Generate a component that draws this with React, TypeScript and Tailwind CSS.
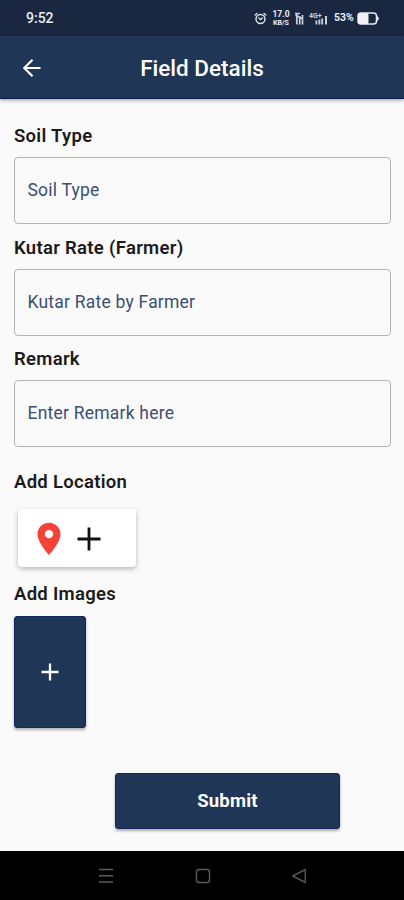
import React from 'react';

function AlarmIcon() {
  return (
    <svg width="13" height="13" viewBox="0 0 13 13" fill="none" stroke="#dfe4ec" strokeWidth="1.4" strokeLinecap="round">
      <circle cx="6.5" cy="7" r="4.5" />
      <path d="M1.200 3 3 1.400M11.800 3 10 1.400M4.800 6l1.800 1.500L8.400 6" />
    </svg>
  );
}

function VolteIcon() {
  return (
    <svg width="9" height="13" viewBox="0 0 9 13" fill="none" stroke="#c9d0dc" strokeWidth="1.7">
      <path d="M0 1.500h5M1.800 1v11.500M4.700 4v8.500M7.500 3v9.500M.5 3l7 4" />
    </svg>
  );
}

function SignalIcon() {
  return (
    <svg width="19" height="13" viewBox="0 0 19 13" fill="#c9d0dc">
      <path d="M6.500 8.500h1.800v4H6.500zM9.500 7.500h1.800v5H9.500zM12.300 6.500h1.800v6h-1.800zM16 4h2v8.500h-2z" />
      <text x="0" y="6" fontSize="7" fontWeight="700" fontFamily="Roboto">4G+</text>
    </svg>
  );
}

function BatteryIcon() {
  return (
    <svg width="23" height="13" viewBox="0 0 23 13">
      <rect x="1" y="1" width="18.5" height="11" rx="3" fill="none" stroke="#e6eaf0" strokeWidth="1.5" />
      <rect x="1" y="1" width="10.500" height="11" rx="2" fill="#f1f3f6" />
      <path d="M20 3.500 22.200 6.500 20 9.500z" fill="#e6eaf0" />
    </svg>
  );
}

function StatusBar() {
  return (
    <div className="flex h-9 items-center bg-[#1a2740] pl-[26px] pr-6 text-[#e8ecf2]">
      <span className="text-[14px] font-medium leading-[18px]">9:52</span>
      <div className="ml-auto flex items-center">
        <AlarmIcon />
        <div className="ml-[5px] flex w-[18px] flex-col items-center font-bold">
          <span className="text-[8.5px] leading-[10px]">17.0</span>
          <span className="text-[7px] leading-[8px]">KB/S</span>
        </div>
        <div className="ml-[5px]"><VolteIcon /></div>
        <div className="ml-[5px]"><SignalIcon /></div>
        <span className="ml-[6px] w-[21px] text-[10.5px] font-bold leading-3">53%</span>
        <div className="ml-[2px]"><BatteryIcon /></div>
      </div>
    </div>
  );
}

function Header() {
  return (
    <header className="grid h-[63px] grid-cols-[1fr_auto_1fr] items-center border-b border-[#0b1d48] bg-[#203656] pt-[2px] shadow-[0_1px_4px_rgba(0,0,0,0.4)]">
      <button className="ml-[22px] w-5" aria-label="Back">
        <svg width="20" height="20" viewBox="0 0 20 20" fill="none" stroke="#fff" strokeWidth="2.2">
          <path d="M18.500 10h-16M10.500 1.800 2.300 10l8.200 8.200" />
        </svg>
      </button>
      <h1 className="text-[22.5px] font-medium leading-7 text-white">Field Details</h1>
    </header>
  );
}

function Label({ children }: { children: string }) {
  return <div className="text-[18.5px] font-semibold leading-[22px] tracking-[0.3px] text-[#1b1b1b]">{children}</div>;
}

function Field({ label, hint }: { label: string; hint: string }) {
  return (
    <div className="h-[111.5px]">
      <Label>{label}</Label>
      <div className="mt-[10px] flex h-[67px] items-center rounded-[4px] border border-[#b4b4b4] px-[12.5px] text-[17.5px] tracking-[0.22px] text-[#3c4f72]">
        {hint}
      </div>
    </div>
  );
}

export default function App() {
  return (
    <div className="flex h-[900px] w-[404px] flex-col overflow-hidden bg-[#fafafa] font-[Roboto,sans-serif]">
      <StatusBar />
      <Header />
      <main className="flex-1 pl-[14px] pr-[13px] pt-[26px]">
        <Field label="Soil Type" hint="Soil Type" />
        <Field label="Kutar Rate (Farmer)" hint="Kutar Rate by Farmer" />
        <Field label="Remark" hint="Enter Remark here" />
        <div className="mt-[11px]">
          <Label>Add Location</Label>
          <button className="ml-1 mt-4 flex h-[58px] w-[118px] items-center rounded-[4px] bg-white pl-[19px] pt-[2px] shadow-[0_2px_5px_rgba(0,0,0,0.28)]">
            <svg width="24" height="34" viewBox="0 0 24 34">
              <path d="M12 .8C5.6.8.5 5.8.5 12.2.5 20.6 12 33 12 33s11.500-12.400 11.500-20.800C23.500 5.800 18.400.8 12 .8zm0 15.500a4.200 4.200 0 1 1 0-8.400 4.200 4.200 0 0 1 0 8.400z" fill="#f44336" />
            </svg>
            <svg className="ml-4" width="24" height="24" viewBox="0 0 24 24" stroke="#111" strokeWidth="2.8">
              <path d="M12 .5v23M.5 12h23" />
            </svg>
          </button>
        </div>
        <div className="mt-4">
          <Label>Add Images</Label>
          <button className="mt-[11px] flex h-[112px] w-[72px] items-center justify-center rounded-[3px] border border-[#14275a] bg-[#203656] shadow-[0_2px_3px_rgba(0,0,0,0.3)]">
            <svg width="18" height="18" viewBox="0 0 18 18" stroke="#fff" strokeWidth="2.3">
              <path d="M9 .5v17M.5 9h17" />
            </svg>
          </button>
        </div>
        <button className="ml-[101px] mt-[45px] flex h-[56px] w-[225px] items-center justify-center rounded-[3px] border border-[#14275a] bg-[#203656] pt-[3px] text-[18.5px] font-bold tracking-[0.2px] text-white shadow-[0_2px_3px_rgba(0,0,0,0.3)]">
          Submit
        </button>
      </main>
      <nav className="flex h-[49px] items-center justify-between bg-black pl-[98px] pr-[97px]">
        <svg width="16" height="16" viewBox="0 0 16 16" stroke="#5c5c5c" strokeWidth="1.6">
          <path d="M1 1.500h14M1 7.800h14M1 14h14" />
        </svg>
        <svg width="16" height="16" viewBox="0 0 16 16" fill="none" stroke="#555" strokeWidth="1.500">
          <rect x="1.500" y="1.500" width="13" height="13" rx="2.500" />
        </svg>
        <svg width="16" height="16" viewBox="0 0 16 16" fill="none" stroke="#555" strokeWidth="1.500" strokeLinejoin="round">
          <path d="M14.300 1.500v13L1.800 8z" />
        </svg>
      </nav>
    </div>
  );
}
